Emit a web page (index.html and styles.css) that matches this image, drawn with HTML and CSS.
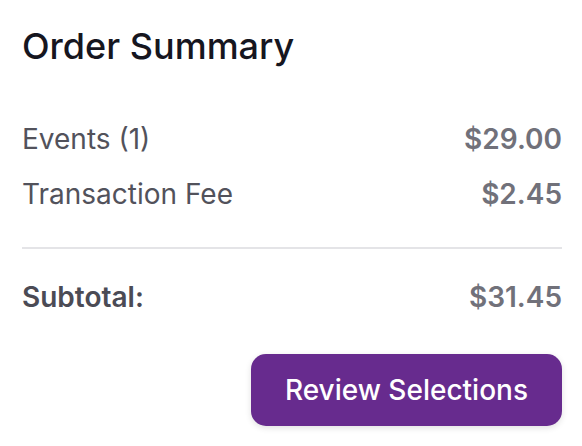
FILE: index.html
```html
<!DOCTYPE html>
<html lang="en">
<head>
<meta charset="utf-8">
<title>Order Summary</title>
<link rel="stylesheet" href="styles.css">
</head>
<body>
<section class="summary">
  <h2 class="summary-title">Order Summary</h2>
  <div class="lines">
    <div class="line">
      <span class="line-label">Events (1)</span>
      <span class="line-amount">$29.00</span>
    </div>
    <div class="line">
      <span class="line-label">Transaction Fee</span>
      <span class="line-amount">$2.45</span>
    </div>
  </div>
  <hr class="divider">
  <div class="line total">
    <span class="total-label">Subtotal:</span>
    <span class="line-amount">$31.45</span>
  </div>
  <div class="actions">
    <button class="btn-primary" type="button">Review Selections</button>
  </div>
</section>
</body>
</html>
```

FILE: styles.css
```css
* { box-sizing: border-box; }

html, body {
  margin: 0;
  padding: 0;
  background: #ffffff;
}

body {
  font-family: "Inter", "Noto Sans", sans-serif;
  -webkit-font-smoothing: antialiased;
}

.summary {
  padding: 26px 20px 20px 22px;
  display: flex;
  flex-direction: column;
}

.summary-title {
  margin: 0;
  font-size: 36px;
  line-height: 40px;
  font-weight: 500;
  color: #16161f;
}

.lines {
  margin-top: 57px;
  display: flex;
  flex-direction: column;
  gap: 23px;
}

.line {
  display: flex;
  justify-content: space-between;
  align-items: baseline;
  font-size: 28px;
  line-height: 32px;
}

.line-label {
  color: #52525b;
  font-weight: 400;
}

.line-amount {
  color: #71717a;
  font-weight: 600;
}

.divider {
  margin: 37px 0 0 0;
  border: 0;
  height: 2px;
  background: #e4e4e7;
}

.total {
  margin-top: 32px;
}

.total-label {
  color: #4b4b55;
  font-weight: 600;
}

.actions {
  margin-top: 41px;
  display: flex;
  justify-content: flex-end;
}

.btn-primary {
  font-family: inherit;
  font-size: 28px;
  font-weight: 500;
  color: #ffffff;
  background: #672b8e;
  border: 0;
  border-radius: 15px;
  height: 72px;
  padding: 0 34px;
  box-shadow: 0 2px 6px rgba(0, 0, 0, 0.12);
}
```
